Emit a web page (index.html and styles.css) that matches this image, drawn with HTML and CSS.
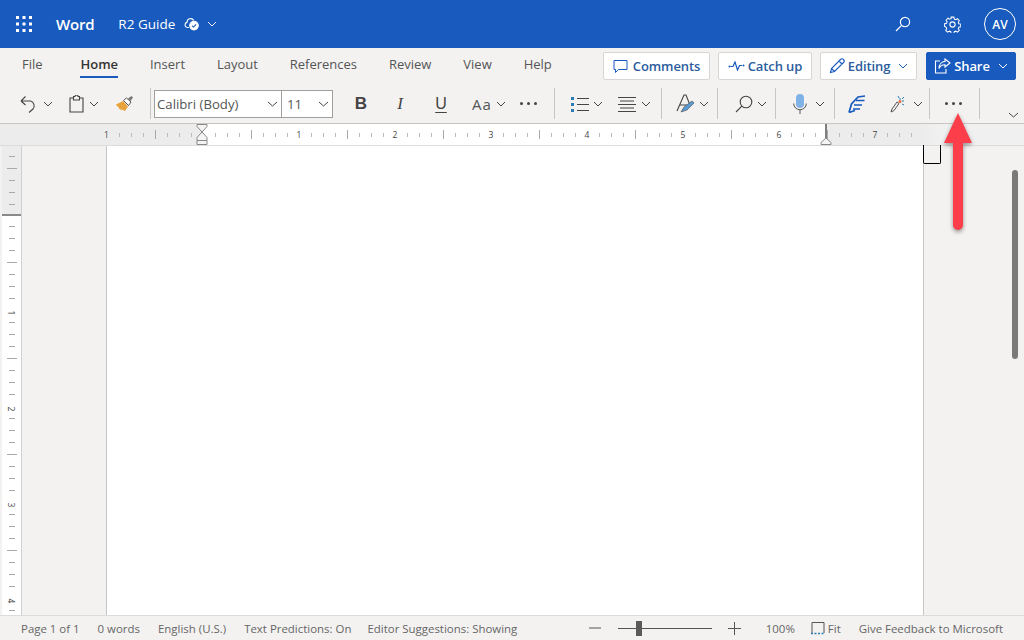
FILE: index.html
```html
<!DOCTYPE html>
<html lang="en">
<head>
<meta charset="UTF-8" />
<title>R2 Guide - Word</title>
<link rel="stylesheet" href="styles.css">
</head>
<body>
  <header class="titlebar">
    <svg class="waffle" width="16" height="16" viewBox="0 0 16 16" fill="#fff">
      <rect x="0" y="0" width="3" height="3"/><rect x="6.5" y="0" width="3" height="3"/><rect x="13" y="0" width="3" height="3"/>
      <rect x="0" y="6.5" width="3" height="3"/><rect x="6.5" y="6.5" width="3" height="3"/><rect x="13" y="6.5" width="3" height="3"/>
      <rect x="0" y="13" width="3" height="3"/><rect x="6.5" y="13" width="3" height="3"/><rect x="13" y="13" width="3" height="3"/>
    </svg>
    <span class="app-name">Word</span>
    <span class="doc-name">R2 Guide</span>
    <svg class="doc-cloud" width="15" height="14" viewBox="0 0 15 14" fill="none" stroke="#fff" stroke-width="1.1">
      <path d="M5 10.5H3.2A2.6 2.6 0 0 1 3 5.4 3.6 3.6 0 0 1 9.8 3.6"/>
      <circle cx="10" cy="8.6" r="4.3" fill="#fff"/>
      <path d="M8 8.8l1.5 1.3 2.5-2.8" stroke="#185abd"/>
    </svg>
    <svg class="doc-chev" width="10" height="6" viewBox="0 0 10 6" fill="none" stroke="#fff"><path d="M1 1l4 4 4-4"/></svg>
    <div class="title-right">
      <svg width="16" height="16" viewBox="0 0 16 16" fill="none" stroke="#fff" stroke-width="1.2"><circle cx="10" cy="6" r="4.6"/><path d="M6.6 9.4L1 15"/></svg>
      <svg class="gear" width="17" height="17" viewBox="0 0 17 17" fill="none" stroke="#fff" stroke-width="1.1">
        <circle cx="8.5" cy="8.5" r="2.6"/>
        <path d="M7 1h3l.4 2.1 1.5.7 1.9-1.1 2 2.1-1.1 1.8.6 1.5 2.1.4v2.9l-2.1.5-.6 1.4 1.1 1.9-2 2-1.9-1.1-1.5.6-.4 2.1H7l-.4-2.1-1.5-.6-1.9 1.1-2-2 1.1-1.9-.6-1.4L0 10.9V8l2.1-.4.6-1.5-1.1-1.8 2-2.1 1.9 1.1 1.500-.7z" transform="translate(.6 .2) scale(.93)"/>
      </svg>
      <span class="avatar">AV</span>
    </div>
  </header>

  <div class="ribbon">
    <div class="tabs-row">
      <nav class="tabs">
        <span class="tab tab-file">File</span>
        <span class="tab tab-active">Home</span>
        <span class="tab">Insert</span>
        <span class="tab">Layout</span>
        <span class="tab">References</span>
        <span class="tab">Review</span>
        <span class="tab">View</span>
        <span class="tab">Help</span>
      </nav>
      <div class="actions">
        <button class="action action-comments">
          <svg width="15" height="15" viewBox="0 0 15 15" fill="none" stroke="#185abd"><path d="M1 1.5h13v9H5.5L2.5 13.5V10.5H1z"/></svg>
          Comments
        </button>
        <button class="action action-catch">
          <svg width="17" height="10" viewBox="0 0 17 10" fill="none" stroke="#185abd" stroke-width="1.2"><path d="M2.5 5.5H5L7 1l2.5 8 2-4.500H14"/><circle cx="1.5" cy="5.5" r="1" fill="#185abd" stroke="none"/><circle cx="15.5" cy="4.5" r="1" fill="#185abd" stroke="none"/></svg>
          Catch up
        </button>
        <button class="action action-editing">
          <svg width="16" height="16" viewBox="0 0 16 16" fill="none" stroke="#185abd" stroke-width="1.1"><path d="M1.5 14.5l1-4L11.500 1.500a2 2 0 0 1 3 3L5.500 13.500zM2.500 10.500l3 3M10 3l3 3"/></svg>
          Editing
          <svg class="action-chev" width="10" height="6" viewBox="0 0 10 6" fill="none" stroke="#185abd"><path d="M1 1l4 4 4-4"/></svg>
        </button>
        <button class="action action-share">
          <svg width="17" height="16" viewBox="0 0 17 16" fill="none" stroke="#fff" stroke-width="1.1"><path d="M11 1l5 4-5 4V6.700C8 6.700 6 8 5 10.500 5 6.500 7.500 3.600 11 3.400z"/><path d="M6 3H1.500v12H12v-4"/></svg>
          Share
          <svg class="action-chev" width="10" height="6" viewBox="0 0 10 6" fill="none" stroke="#fff"><path d="M1 1l4 4 4-4"/></svg>
        </button>
      </div>
    </div>

    <div class="toolbar">
      <div class="group group-start">
        <span class="tool">
          <svg width="18" height="18" viewBox="0 0 18 18" fill="none" stroke="#444" stroke-width="1.1"><path d="M1 6h9.500a5 5 0 0 1 2.500 8L9 17.500M1 6l4.500-4.500M1 6l4.500 4"/></svg>
          <svg class="chev" width="10" height="6" viewBox="0 0 10 6"><path d="M1 1l4 4 4-4"/></svg>
        </span>
        <span class="tool">
          <svg width="15" height="18" viewBox="0 0 15 18" fill="none" stroke="#444" stroke-width="1.1"><path d="M4.500 3H1v14h13V3h-3.500M4.500 1.500h1.500a1.500 1.500 0 0 1 3 0h1.500V5h-6z" /></svg>
          <svg class="chev" width="10" height="6" viewBox="0 0 10 6"><path d="M1 1l4 4 4-4"/></svg>
        </span>
        <span class="tool">
          <svg width="20" height="18" viewBox="0 0 20 18"><path d="M1 9.500l7-3.500 5 5.500-3 4.500-2.500-1-1-1.500v2l-2.500-2-1-2.500-.5 1z" fill="#e8a33d"/><path d="M8.500 5.500l3-2.500 4.500 4-2.500 3.500z" fill="#fff" stroke="#555"/><path d="M13 3.500l3.500-2.500 1.500 1.500-2.500 3.500" fill="#777"/></svg>
        </span>
      </div>
      <i class="sep sep-font"></i>
      <div class="font-picker">
        <span class="font-name">Calibri (Body)<svg class="chev" width="11" height="6" viewBox="0 0 11 6"><path d="M1 1l4.500 4 4.500-4"/></svg></span>
        <span class="font-size">11<svg class="chev" width="11" height="6" viewBox="0 0 11 6"><path d="M1 1l4.500 4 4.500-4"/></svg></span>
      </div>
      <div class="group group-format">
        <span class="glyph glyph-b">B</span>
        <span class="glyph glyph-i">I</span>
        <span class="glyph glyph-u">U</span>
        <span class="tool tool-case"><span class="glyph-aa">Aa</span><svg class="chev" width="10" height="6" viewBox="0 0 10 6"><path d="M1 1l4 4 4-4"/></svg></span>
        <span class="dots"><b></b><b></b><b></b></span>
      </div>
      <i class="sep"></i>
      <div class="group group-para">
        <span class="tool tool-list">
          <svg width="18" height="16" viewBox="0 0 18 16"><rect x="0" y="1" width="3" height="3" fill="#2b7cb3"/><rect x="0" y="7" width="3" height="3" fill="#2b7cb3"/><rect x="0" y="13" width="3" height="3" fill="#2b7cb3"/><path d="M6 2.500h12M6 8.500h12M6 14.500h12" stroke="#444"/></svg>
          <svg class="chev" width="10" height="6" viewBox="0 0 10 6"><path d="M1 1l4 4 4-4"/></svg>
        </span>
        <span class="tool">
          <svg width="18" height="16" viewBox="0 0 18 16" stroke="#444"><path d="M0 1.500h18M2 5h14M0 8.500h18M2 12h14M0 15.500h18"/></svg>
          <svg class="chev" width="10" height="6" viewBox="0 0 10 6"><path d="M1 1l4 4 4-4"/></svg>
        </span>
      </div>
      <i class="sep"></i>
      <div class="group group-styles">
        <span class="tool tool-styles">
          <svg width="20" height="19" viewBox="0 0 20 19" fill="none"><path d="M1 17L8 1h2l4 10" stroke="#444" stroke-width="1.100"/><path d="M4 11h7" stroke="#444"/><path d="M5 18l3-5 8-6 2 2-7 7z" fill="#5a9bd4" stroke="#444" stroke-width=".6"/></svg>
          <svg class="chev" width="10" height="6" viewBox="0 0 10 6"><path d="M1 1l4 4 4-4"/></svg>
        </span>
      </div>
      <i class="sep"></i>
      <div class="group group-find">
        <span class="tool tool-find">
          <svg width="18" height="18" viewBox="0 0 18 18" fill="none" stroke="#444" stroke-width="1.100"><circle cx="11" cy="7" r="5.800"/><path d="M6.800 11.200L1 17"/></svg>
          <svg class="chev" width="10" height="6" viewBox="0 0 10 6"><path d="M1 1l4 4 4-4"/></svg>
        </span>
      </div>
      <i class="sep"></i>
      <div class="group group-mic">
        <span class="tool tool-mic">
          <svg width="14" height="20" viewBox="0 0 14 20" fill="none"><rect x="3" y="0" width="8" height="14" rx="4" fill="#7fb2e5"/><path d="M.7 9.500a6.300 6.300 0 0 0 12.600 0M7 16v4" stroke="#555"/></svg>
          <svg class="chev" width="10" height="6" viewBox="0 0 10 6"><path d="M1 1l4 4 4-4"/></svg>
        </span>
      </div>
      <i class="sep"></i>
      <div class="group group-editor">
        <span class="tool">
          <svg width="18" height="18" viewBox="0 0 18 18" fill="none" stroke="#185abd" stroke-width="1.700"><path d="M1 17.500L3.500 9 10 2l7-1M8 5.500h8.500M6 10h8M5 14h7M1 17.500l6-2"/></svg>
        </span>
        <span class="tool tool-designer">
          <svg width="16" height="18" viewBox="0 0 16 18" fill="none"><path d="M1 17l1-3 5-7 2 1.500-5 7z" stroke="#555"/><path d="M10 3v2M14 6h-2M8 1l1 2M14 2l-2 2M14 10l-2-1" stroke="#2b7cb3"/><circle cx="10" cy="6.500" r="1.500" fill="#e8704a"/></svg>
          <svg class="chev" width="10" height="6" viewBox="0 0 10 6"><path d="M1 1l4 4 4-4"/></svg>
        </span>
      </div>
      <i class="sep"></i>
      <span class="dots dots-more"><b></b><b></b><b></b></span>
      <i class="sep"></i>
      <svg class="chev collapse" width="11" height="6" viewBox="0 0 11 6"><path d="M1 1l4.500 4 4.500-4"/></svg>
    </div>
  </div>

  <div class="ruler">
    <span class="inch inch-first">1</span>
    <span class="inch"></span>
    <span class="inch">1</span>
    <span class="inch">2</span>
    <span class="inch">3</span>
    <span class="inch">4</span>
    <span class="inch">5</span>
    <span class="inch">6</span>
    <span class="inch">7</span>
    <svg class="indent-left" width="12" height="22" viewBox="0 0 12 22" fill="#f4f4f4" stroke="#888"><path d="M1 .5h10v2L6 8 1 2.500zM1 13.500L6 8l5 5.500v3H1zM1 16.500h10v4H1z"/></svg>
    <svg class="indent-right" width="12" height="22" viewBox="0 0 12 22" fill="#f4f4f4" stroke="#888"><path d="M1 20.500v-2L6 14l5 4.500v2z"/><path d="M6 0v14" stroke="#555" stroke-width="1.500"/></svg>
  </div>

  <main class="workspace">
    <div class="vruler">
      <div class="vruler-margin"></div>
      <div class="vruler-body">
        <span class="vinch">1</span>
        <span class="vinch">2</span>
        <span class="vinch">3</span>
        <span class="vinch">4</span>
      </div>
    </div>
    <div class="gutter"></div>
    <div class="page"></div>
    <aside class="side">
      <div class="crop-mark"></div>
      <div class="scrollbar"></div>
    </aside>
  </main>

  <footer class="status">
    <span class="status-item">Page 1 of 1</span>
    <span class="status-item">0 words</span>
    <span class="status-item">English (U.S.)</span>
    <span class="status-item status-predictions">Text Predictions: On</span>
    <span class="status-item">Editor Suggestions: Showing</span>
    <div class="status-right">
      <svg width="12" height="2" viewBox="0 0 12 2"><path d="M0 1h12" stroke="#555"/></svg>
      <span class="zoom-track"><i class="zoom-thumb"></i></span>
      <svg width="13" height="13" viewBox="0 0 13 13" stroke="#555"><path d="M0 6.500h13M6.500 0v13"/></svg>
      <span class="status-item zoom-value">100%</span>
      <span class="status-item fit">
        <svg width="14" height="13" viewBox="0 0 14 13" fill="none"><path d="M1 11V.5h12V11" stroke="#555"/><path d="M0 11.500h14" stroke="#2b7cb3" stroke-dasharray="2 1.500" stroke-width="1.500"/></svg>
        Fit
      </span>
      <span class="status-item feedback">Give Feedback to Microsoft</span>
    </div>
  </footer>

  <svg class="arrow" width="36" height="128" viewBox="0 0 36 128">
    <path d="M18 1L32 31H23V113a5 5 0 0 1-10 0V31H4z" fill="#fc3d4a"/>
  </svg>
</body>
</html>
```

FILE: styles.css
```css
* { box-sizing: border-box; }
html, body { height: 100%; }
body {
  margin: 0;
  height: 640px;
  overflow: hidden;
  position: relative;
  display: flex;
  flex-direction: column;
  background: #f3f2f1;
  color: #444;
  font-family: "Open Sans", "Noto Sans", sans-serif;
}
svg { display: block; flex: none; }

/* title bar */
.titlebar {
  height: 48px;
  flex: none;
  display: flex;
  align-items: center;
  background: #185abd;
  color: #fff;
  padding: 0 8px 0 16px;
}
.app-name { margin-left: 24px; font-size: 15px; font-weight: 600; letter-spacing: -.2px; }
.doc-name { margin-left: 24px; font-size: 13.500px; }
.doc-cloud { margin-left: 9px; }
.doc-chev { margin-left: 8px; }
.title-right { margin-left: auto; display: flex; align-items: center; }
.gear { margin-left: 33px; }
.avatar {
  margin-left: 23px;
  width: 32px;
  height: 32px;
  border: 1px solid #fff;
  border-radius: 50%;
  display: flex;
  align-items: center;
  justify-content: center;
  font-size: 12px;
  font-weight: 600;
}

/* ribbon */
.ribbon { flex: none; height: 76px; background: #f3f2f1; border-bottom: 1px solid #c8c6c4; }
.tabs-row { height: 34px; display: flex; align-items: center; justify-content: space-between; padding: 2px 8px 0 22px; }
.tabs { display: flex; gap: 31.900px; font-size: 13px; color: #555; }
.tab { position: relative; line-height: 24px; margin-top: -4px; }
.tab-file { margin-right: 6px; }
.tab-active { font-weight: 600; color: #333; }
.tab-active::after {
  content: "";
  position: absolute;
  left: 0; right: 0; bottom: -2px;
  height: 2px;
  background: #185abd;
}
.actions { display: flex; gap: 8px; }
.action {
  height: 28px;
  display: flex;
  align-items: center;
  gap: 3px;
  padding: 0;
  justify-content: center;
  background: #fff;
  border: 1px solid #d8d6d4;
  border-radius: 2px;
  color: #2b5c9e;
  font: 600 13px "Open Sans", sans-serif;
  letter-spacing: -.1px;
}
.action-comments { width: 107px; gap: 5px; }
.action-catch { width: 94px; }
.action-editing { width: 97px; margin-right: 1px; }
.action-share { width: 90px; background: #185abd; border-color: #185abd; color: #fff; }
.action-chev { margin-left: 5px; }

/* toolbar */
.toolbar { height: 41px; display: flex; align-items: center; padding-top: 2px; position: relative; }
.group { display: flex; align-items: center; }
.group-start { margin-left: 20px; gap: 16px; }
.tool { display: flex; align-items: center; gap: 5px; }
.chev { fill: none; stroke: #444; }
.sep { width: 1px; height: 31px; background: #c8c6c4; flex: none; }
.sep-font { margin-left: 15px; }
.font-picker {
  margin-left: 3px;
  width: 179px;
  height: 28px;
  display: flex;
  background: #fff;
  border: 1px solid #a19f9d;
  font-size: 13.200px;
  color: #555;
}
.font-name, .font-size { display: flex; align-items: center; justify-content: space-between; }
.font-name { width: 127px; padding: 0 3px 0 2px; border-right: 1px solid #a19f9d; }
.font-size { flex: 1; padding: 0 3px 0 5px; }
.group-format { margin-left: 21px; margin-right: 17px; }
.glyph { width: 14px; text-align: center; font-size: 17px; color: #444; }
.glyph-b { font-weight: 700; font-family: "Liberation Sans", sans-serif; }
.glyph-i { margin-left: 25px; font-family: "Liberation Serif", serif; font-style: italic; }
.glyph-u { margin-left: 27px; font-size: 16px; text-decoration: underline; text-underline-offset: 3px; text-decoration-thickness: 1px; font-family: "Liberation Sans", sans-serif; }
.tool-case { margin-left: 24px; gap: 4px; }
.glyph-aa { font-size: 15px; letter-spacing: 1px; color: #555; }
.dots { display: flex; gap: 4px; margin-left: 14px; }
.dots b { width: 3px; height: 3px; border-radius: 50%; background: #444; }
.group-para { margin-left: 16px; margin-right: 10px; gap: 15px; }
.tool-list { gap: 4px; }
.group-styles { margin-left: 14px; margin-right: 8px; }
.tool-styles { gap: 3px; }
.group-find { margin-left: 17px; margin-right: 8px; }
.tool-find { gap: 4px; }
.group-mic { margin-left: 17px; margin-right: 9px; }
.tool-mic { gap: 8px; }
.group-editor { margin-left: 13px; margin-right: 6px; gap: 24px; }
.tool-designer { gap: 7px; }
.dots-more { margin: 0 17px 0 15px; }
.collapse { position: absolute; right: 5px; bottom: 5px; }

/* rulers */
.ruler {
  flex: none;
  height: 22px;
  position: relative;
  display: flex;
  align-items: center;
  padding-left: 101px;
  background: linear-gradient(to right, #ececec 203px, #fff 203px, #fff 827px, #ececec 827px, #ececec 920px, #f0f0f0 940px);
  border-bottom: 1px solid #dcdcdc;
  font-size: 8.500px;
  color: #444;
}
.inch {
  width: 96px;
  height: 12px;
  text-align: center;
  line-height: 12px;
  background:
    linear-gradient(#aaa, #aaa) 0 center / 1px 9px no-repeat,
    linear-gradient(to right,
      transparent 12px, #bbb 12px 13px, transparent 13px 24px, #bbb 24px 25px,
      transparent 25px 36px, #bbb 36px 37px, transparent 37px 60px, #bbb 60px 61px,
      transparent 61px 72px, #bbb 72px 73px, transparent 73px 84px, #bbb 84px 85px,
      transparent 85px) 0 center / 96px 4px no-repeat;
}
.inch-first {
  width: 54px;
  text-align: left;
  padding-left: 3px;
  background:
    linear-gradient(to right,
      transparent 18px, #bbb 18px 19px, transparent 19px 30px, #bbb 30px 31px,
      transparent 31px 42px, #bbb 42px 43px, transparent 43px) 0 center / 54px 4px no-repeat;
}
.indent-left { position: absolute; left: 196px; top: 0; }
.indent-right { position: absolute; left: 820px; top: 0; }

.workspace { flex: 1; min-height: 0; display: flex; position: relative; }
.vruler { width: 22px; flex: none; display: flex; flex-direction: column; padding-left: 2px; border-right: 1px solid #d0d0d0; overflow: hidden; }
.vruler-margin {
  height: 70px;
  flex: none;
  background-color: #ececec;
  border-bottom: 2px solid #8a8a8a;
  background-image:
    linear-gradient(#aaa, #aaa),
    repeating-linear-gradient(to bottom, transparent 0 10px, #aaa 10px 11px, transparent 11px 12px);
  background-size: 10px 1px, 6px 100%;
  background-position: center 22px, center;
  background-repeat: no-repeat;
}
.vruler-body {
  flex: 1;
  min-height: 0;
  background-color: #fff;
  background-image:
    repeating-linear-gradient(to bottom, transparent 0 46px, #aaa 46px 47px, transparent 47px 96px),
    repeating-linear-gradient(to bottom, transparent 0 10px, #aaa 10px 11px, transparent 11px 12px);
  background-size: 10px 100%, 6px 100%;
  background-position: center, center;
  background-repeat: no-repeat;
  padding-top: 91px;
  display: flex;
  flex-direction: column;
  align-items: center;
  font-size: 8.500px;
  color: #444;
}
.vinch { height: 12px; flex: none; margin-bottom: 84px; padding: 0 3px; line-height: 12px; background: #fff; transform: rotate(90deg); }
.gutter { width: 85px; flex: none; border-right: 1px solid #c8c6c4; }
.page { width: 817px; flex: none; background: #fff; border-right: 1px solid #c8c6c4; }
.side { flex: 1; position: relative; }
.crop-mark {
  position: absolute;
  left: -1px; top: -1px;
  width: 18px;
  height: 19px;
  border: 1px solid #000;
  border-top: none;
  border-radius: 0 0 2px 2px;
}
.scrollbar {
  position: absolute;
  left: 88px; top: 24px;
  width: 6px;
  height: 189px;
  border-radius: 3px;
  background: #7a7a7a;
}

/* status bar */
.status {
  flex: none;
  height: 25px;
  display: flex;
  align-items: center;
  padding: 0 21px;
  gap: 18px;
  border-top: 1px solid #dcdcdc;
  font-size: 11.450px;
  color: #666;
}
.status-predictions { margin-right: -2px; }
.status-right { margin-left: auto; display: flex; align-items: center; }
.zoom-track { margin-left: 17px; width: 94px; height: 1px; background: #555; position: relative; margin-right: 16px; }
.zoom-thumb { position: absolute; left: 18px; top: -7px; width: 6px; height: 15px; background: #5a5a5a; }
.zoom-value { margin-left: 25px; }
.fit { display: flex; align-items: center; gap: 3px; margin-left: 16px; }
.feedback { margin-left: 18px; }

.arrow { position: absolute; left: 940px; top: 112px; filter: drop-shadow(0 2px 2px rgba(0,0,0,.4)); }
```
